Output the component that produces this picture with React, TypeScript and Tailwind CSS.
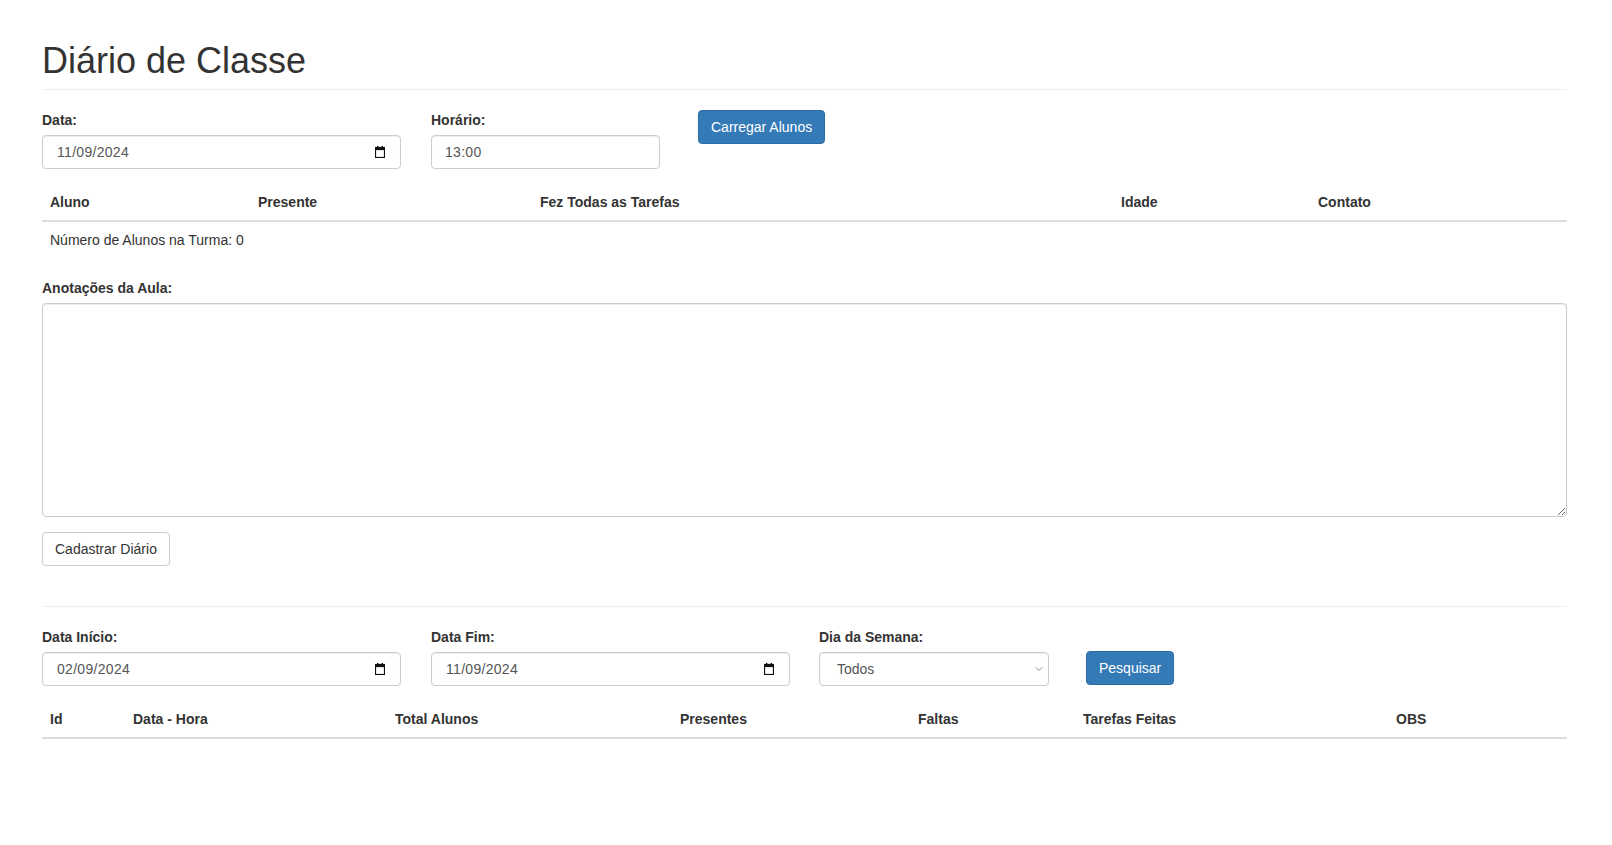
import { ChevronDown } from "lucide-react";

const inputBase =
  "flex h-[34px] items-center rounded-[4px] border border-[#ccc] bg-white text-[14px] text-[#555] shadow-[inset_0_1px_1px_rgba(0,0,0,0.075)]";

function CalendarIcon() {
  return (
    <svg width="10" height="12" viewBox="0 0 10 12" aria-hidden="true">
      <rect x="2" y="0" width="1.4" height="2" fill="#111" />
      <rect x="6.6" y="0" width="1.4" height="2" fill="#111" />
      <rect x="0.5" y="1.5" width="9" height="10" fill="none" stroke="#111" strokeWidth="1.2" />
      <rect x="0.5" y="1.5" width="9" height="2.6" fill="#111" />
    </svg>
  );
}

function DateField({ label, value, width }: { label: string; value: string; width: string }) {
  return (
    <div className={`flex flex-col ${width}`}>
      <label className="mb-[5px] text-[14px] leading-[20px] font-bold text-[#333]">{label}</label>
      <div className={`${inputBase} justify-between pl-[14px] pr-[15px]`}>
        <span className="tracking-[0.3px]">{value}</span>
        <CalendarIcon />
      </div>
    </div>
  );
}

type Col = { label: string; width: string };

const TURMA_COLS: Col[] = [
  { label: "Aluno", width: "w-[208px]" },
  { label: "Presente", width: "w-[282px]" },
  { label: "Fez Todas as Tarefas", width: "w-[581px]" },
  { label: "Idade", width: "w-[197px]" },
  { label: "Contato", width: "" },
];

const HIST_COLS: Col[] = [
  { label: "Id", width: "w-[83px]" },
  { label: "Data - Hora", width: "w-[262px]" },
  { label: "Total Alunos", width: "w-[285px]" },
  { label: "Presentes", width: "w-[238px]" },
  { label: "Faltas", width: "w-[165px]" },
  { label: "Tarefas Feitas", width: "w-[313px]" },
  { label: "OBS", width: "" },
];

function HeadRow({ cols }: { cols: Col[] }) {
  return (
    <thead>
      <tr>
        {cols.map((c) => (
          <th
            key={c.label}
            className={`${c.width} border-b-2 border-[#ddd] p-[8px] text-left text-[14px] leading-[20px] font-bold text-[#333]`}
          >
            {c.label}
          </th>
        ))}
      </tr>
    </thead>
  );
}

export default function App() {
  return (
    <div className="min-h-screen bg-white pl-[42px] pr-[45px] pt-[41px] font-['Liberation_Sans',Arial,sans-serif] text-[14px] text-[#333]">
      <h1 className="border-b border-[#eee] pb-[8px] text-[36px] leading-[40px] font-normal text-[#333]">
        Diário de Classe
      </h1>

      <div className="mt-[20px] flex items-start">
        <DateField label="Data:" value="11/09/2024" width="w-[359px]" />
        <div className="ml-[30px] flex w-[229px] flex-col">
          <label className="mb-[5px] text-[14px] leading-[20px] font-bold">Horário:</label>
          <div className={`${inputBase} pl-[13px] tracking-[0.3px]`}>13:00</div>
        </div>
        <button
          type="button"
          className="ml-[38px] h-[34px] rounded-[4px] border border-[#2e6da4] bg-[#337ab7] px-[12px] text-[14px] text-white"
        >
          Carregar Alunos
        </button>
      </div>

      <table className="mt-[15px] w-full table-fixed border-collapse">
        <HeadRow cols={TURMA_COLS} />
        <tbody>
          <tr>
            <td colSpan={5} className="p-[8px] leading-[20px]">
              Número de Alunos na Turma: 0
            </td>
          </tr>
        </tbody>
      </table>

      <div className="mt-[20px] flex flex-col">
        <label className="mb-[5px] leading-[20px] font-bold">Anotações da Aula:</label>
        <textarea className="h-[214px] w-full rounded-[4px] border border-[#ccc] bg-white px-[12px] py-[6px] text-[#555] shadow-[inset_0_1px_1px_rgba(0,0,0,0.075)] outline-none" />
      </div>

      <button
        type="button"
        className="mt-[15px] h-[34px] rounded-[4px] border border-[#ccc] bg-white px-[12px] text-[14px] text-[#333]"
      >
        Cadastrar Diário
      </button>

      <hr className="mt-[40px] border-t border-[#eee]" />

      <div className="mt-[20px] flex items-end">
        <DateField label="Data Início:" value="02/09/2024" width="w-[359px]" />
        <div className="ml-[30px]">
          <DateField label="Data Fim:" value="11/09/2024" width="w-[359px]" />
        </div>
        <div className="ml-[29px] flex w-[230px] flex-col">
          <label className="mb-[5px] leading-[20px] font-bold">Dia da Semana:</label>
          <div className={`${inputBase} justify-between pl-[17px] pr-[3px]`}>
            <span>Todos</span>
            <ChevronDown size={12} strokeWidth={1.5} className="text-[#666]" />
          </div>
        </div>
        <button
          type="button"
          className="mb-[1px] ml-[37px] h-[34px] rounded-[4px] border border-[#2e6da4] bg-[#337ab7] px-[12px] text-[14px] text-white"
        >
          Pesquisar
        </button>
      </div>

      <table className="mt-[15px] w-full table-fixed border-collapse">
        <HeadRow cols={HIST_COLS} />
        <tbody />
      </table>
    </div>
  );
}
